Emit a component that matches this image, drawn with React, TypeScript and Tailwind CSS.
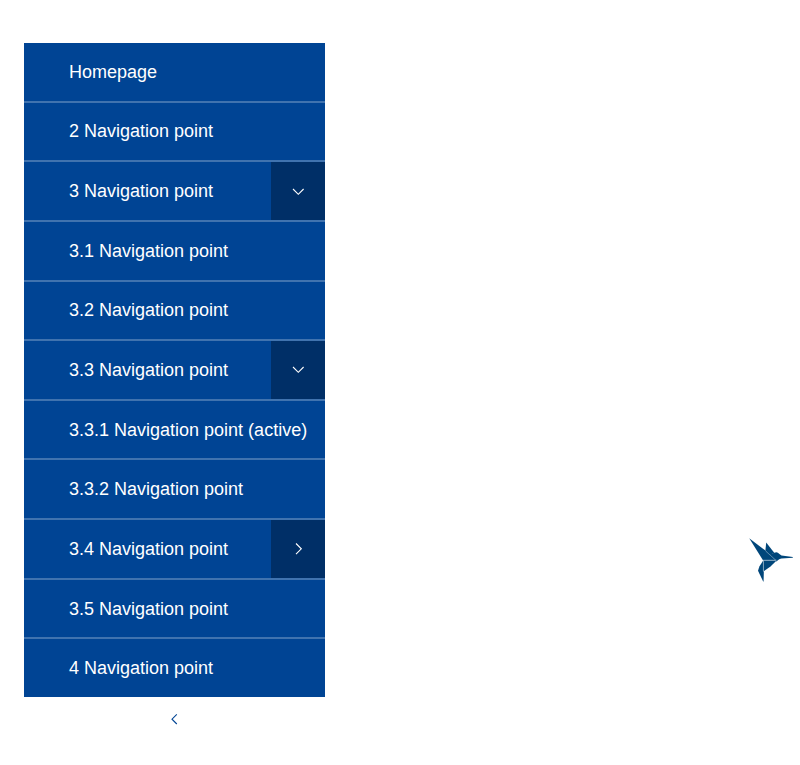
import { useState } from "react";

type Toggle = "open" | "closed";
type Item = { label: string; toggle?: Toggle; active?: boolean };

const items: Item[] = [
  { label: "Homepage" },
  { label: "2 Navigation point" },
  { label: "3 Navigation point", toggle: "open" },
  { label: "3.1 Navigation point" },
  { label: "3.2 Navigation point" },
  { label: "3.3 Navigation point", toggle: "open" },
  { label: "3.3.1 Navigation point (active)", active: true },
  { label: "3.3.2 Navigation point" },
  { label: "3.4 Navigation point", toggle: "closed" },
  { label: "3.5 Navigation point" },
  { label: "4 Navigation point" },
];

const chevrons = {
  down: "M1 4 6.3 9.3 11.6 4",
  right: "M4 1.5 9.3 6.8 4 12.1",
  left: "M8.8 1.4 4 6.2 8.8 11",
};

function Chevron({ direction }: { direction: keyof typeof chevrons }) {
  return (
    <svg width="13" height="13" viewBox="0 0 13 13" fill="none" stroke="currentColor" aria-hidden="true">
      <path d={chevrons[direction]} strokeWidth="1.1" />
    </svg>
  );
}

function NavRow({ item }: { item: Item }) {
  const [open, setOpen] = useState(item.toggle === "open");
  return (
    <li className="flex bg-[#004494]">
      <a
        href="#"
        aria-current={item.active ? "page" : undefined}
        className="flex flex-1 items-center whitespace-nowrap pl-[45px] text-[18px] leading-[22px] text-white"
      >
        {item.label}
      </a>
      {item.toggle && (
        <button
          type="button"
          aria-expanded={open}
          aria-label={`Toggle ${item.label}`}
          onClick={() => setOpen(!open)}
          className="flex w-[54px] items-center justify-center bg-[#002f67] text-white"
        >
          <Chevron direction={open ? "down" : "right"} />
        </button>
      )}
    </li>
  );
}

function Hummingbird() {
  return (
    <svg width="44" height="44" viewBox="0 0 44 44" fill="#00467a" aria-hidden="true">
      <path d="M0.2 0.2 19.2 14.6 26.4 22.2 14 22.2Z" />
      <path d="M17.2 4.4 25.4 15 20.6 16.8 16.4 12.6Z" />
      <path d="M19.8 16.8 25.4 14.8 Q28 13 30.4 16 L32.5 17.6 43.8 18.9 43.8 19.8 32.5 20.6 Q30.5 20.8 29.2 22 L27.4 23.6 Z" />
      <path d="M14.4 22.4H27.6L21.5 28.6 14.4 33.6Z" />
      <path d="M14.2 22.4V43.4L9 32.8 10.4 28.5Z" />
      <path d="M14.1 33.4H14.9L14.6 43.4H14.1Z" />
      <path d="M14.2 22.2H27.5M16.6 13 27.3 22.7M14.4 22.5V33" fill="none" stroke="#b5cbdb" strokeWidth="0.5" />
    </svg>
  );
}

export default function App() {
  return (
    <main className="flex items-start justify-between pt-[43px] pr-[7px] pb-8 pl-6 font-['Liberation_Sans',Arial,sans-serif]">
      <div className="w-[301px]">
        <nav aria-label="Main">
          <ul className="grid min-h-[654px] auto-rows-fr gap-0.5 bg-[#4073af]">
            {items.map((item) => (
              <NavRow key={item.label} item={item} />
            ))}
          </ul>
        </nav>
        <button
          type="button"
          aria-label="Collapse navigation"
          className="flex h-11 w-full items-center justify-center text-[#004494]"
        >
          <Chevron direction="left" />
        </button>
      </div>
      <a href="#" aria-label="Hummingbird" className="mt-[495px]">
        <Hummingbird />
      </a>
    </main>
  );
}
